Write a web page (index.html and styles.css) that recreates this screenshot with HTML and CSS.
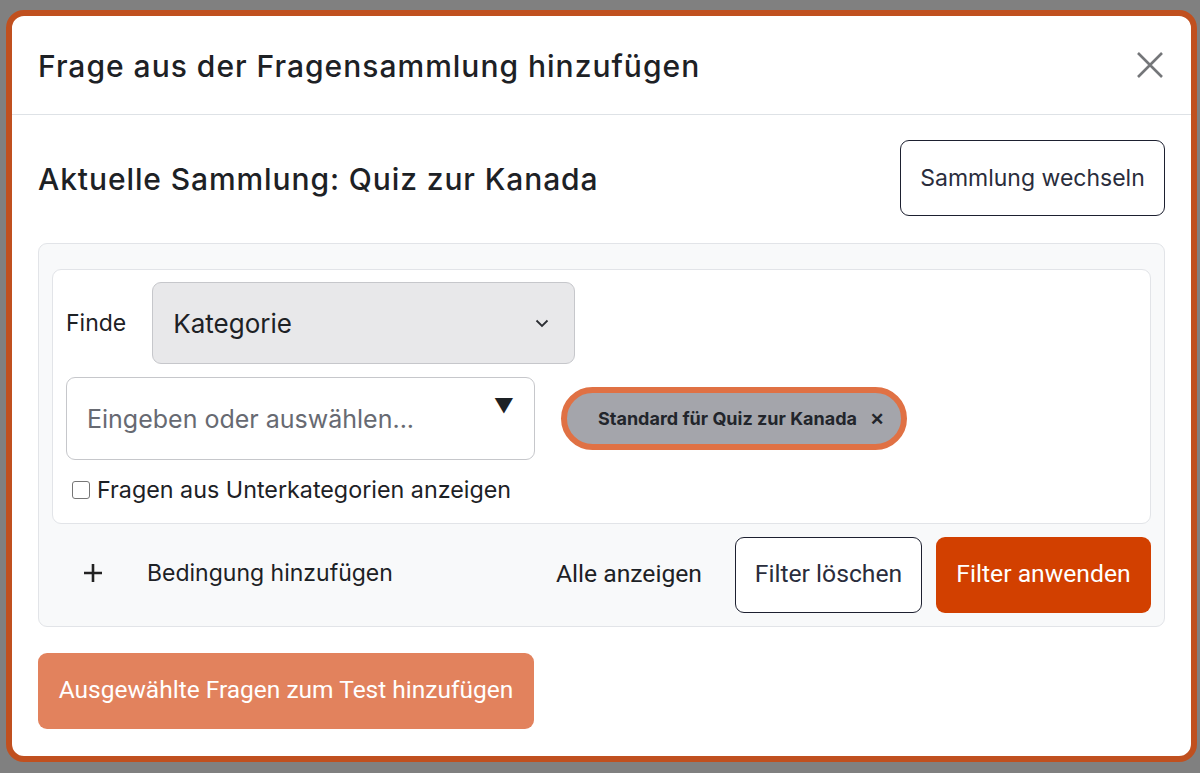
FILE: index.html
```html
<!DOCTYPE html>
<html lang="de">
<head>
<meta charset="utf-8">
<title>Frage aus der Fragensammlung hinzufügen</title>
<link rel="stylesheet" href="styles.css">
</head>
<body>
<div class="modal">
  <header class="modal-header">
    <h1 class="modal-title">Frage aus der Fragensammlung hinzufügen</h1>
    <button class="close" aria-label="Schließen">
      <svg width="26" height="26" viewBox="0 0 26 26"><path d="M1 1 L25 25 M25 1 L1 25" stroke="#747679" stroke-width="2.6" fill="none"/></svg>
    </button>
  </header>
  <main class="modal-body">
    <div class="bank-row">
      <h2 class="bank-title">Aktuelle Sammlung: Quiz zur Kanada</h2>
      <button class="btn btn-outline switch">Sammlung wechseln</button>
    </div>
    <section class="filters">
      <div class="filter-card">
        <div class="find-row">
          <label class="find-label">Finde</label>
          <div class="select">
            <span>Kategorie</span>
            <svg width="14" height="9" viewBox="0 0 14 9"><path d="M1.5 1.5 L7 7 L12.5 1.5" stroke="#2c2e33" stroke-width="1.8" fill="none"/></svg>
          </div>
        </div>
        <div class="value-row">
          <div class="combo">
            <span class="placeholder">Eingeben oder auswählen...</span>
            <span class="combo-arrow">▼</span>
          </div>
          <div class="chip">
            <span>Standard für Quiz zur Kanada</span>
            <span class="chip-x">✕</span>
          </div>
        </div>
        <label class="check-row"><span class="checkbox"></span>Fragen aus Unterkategorien anzeigen</label>
      </div>
      <div class="filter-actions">
        <div class="add-cond">
          <svg class="plus" width="20" height="20" viewBox="0 0 20 20"><path d="M10 1 V19 M1 10 H19" stroke="#222" stroke-width="2.6"/></svg>
          <span>Bedingung hinzufügen</span>
        </div>
        <div class="actions-right">
          <span class="show-all">Alle anzeigen</span>
          <button class="btn btn-outline rb">Filter löschen</button>
          <button class="btn btn-primary rb">Filter anwenden</button>
        </div>
      </div>
    </section>
    <button class="btn btn-add">Ausgewählte Fragen zum Test hinzufügen</button>
  </main>
</div>
</body>
</html>
```
FILE: styles.css
```css
* { box-sizing: border-box; }
html, body { margin: 0; }
body {
  background: #808080;
  padding: 10px 3px 11px 6px;
  font-family: Inter, "Noto Sans", sans-serif;
  color: #1d2125;
}
.modal {
  background: #fff;
  border: 6px solid #c0501f;
  border-radius: 18px;
  height: 752px;
  display: flex;
  flex-direction: column;
}
.modal-header {
  height: 99px;
  border-bottom: 1px solid #dee2e6;
  display: flex;
  align-items: center;
  justify-content: space-between;
  padding: 0 26px 0 26px;
}
.modal-title {
  margin: 0;
  font-family: Inter, sans-serif;
  font-weight: 500;
  font-size: 30px;
  letter-spacing: 1px;
  color: #1d2125;
  padding-top: 2px;
}
.close {
  background: none;
  border: 0;
  padding: 0;
  margin-right: 2px;
  display: flex;
}
.modal-body {
  padding: 25px 26px 26px 26px;
}
.bank-row {
  display: flex;
  justify-content: space-between;
  align-items: center;
}
.bank-title {
  margin: 0;
  font-weight: 500;
  font-size: 30px;
  letter-spacing: 0.9px;
  color: #1d2125;
  padding-top: 2px;
}
.btn {
  font-family: Inter, sans-serif;
  height: 76px;
  border-radius: 9px;
  font-size: 20px;
  padding: 0 10px;
  cursor: pointer;
  white-space: nowrap;
}
.btn-outline {
  background: #fff;
  border: 1px solid #1d2030;
  color: #2a2d3c;
}
.switch { width: 265px; font-size: 23px; }
.filters {
  margin-top: 27px;
  background: #f8f9fa;
  border: 1px solid #e2e4e8;
  border-radius: 9px;
  padding: 25px 13px 13px 13px;
}
.filter-card {
  background: #fff;
  border: 1px solid #e2e4e8;
  border-radius: 9px;
  padding: 12px 13px 20px 13px;
}
.find-row {
  display: flex;
  align-items: center;
  gap: 26px;
}
.find-label { font-size: 23px; color: #1d2125; }
.select {
  width: 423px;
  height: 82px;
  background: #e8e8ea;
  border: 1px solid #c6c7cb;
  border-radius: 9px;
  display: flex;
  align-items: center;
  justify-content: space-between;
  padding: 0 25px 0 20px;
  font-size: 26px;
  color: #1d2125;
}
.value-row {
  margin-top: 13px;
  display: flex;
  align-items: center;
  gap: 26px;
}
.combo {
  width: 469px;
  height: 83px;
  border: 1px solid #c6c7cb;
  border-radius: 9px;
  display: flex;
  justify-content: space-between;
  padding: 0 20px 0 20px;
  font-size: 25px;
}
.placeholder { color: #676a72; align-self: center; }
.combo-arrow { font-size: 20px; color: #1d2125; margin-top: 16px; }
.chip {
  height: 63px;
  border: 6px solid #e07144;
  border-radius: 32px;
  background: #a4a5ab;
  display: flex;
  align-items: center;
  gap: 13px;
  padding: 0 17px 0 31px;
  font-family: Inter, sans-serif;
  font-weight: 700;
  font-size: 18px;
  color: #22252b;
}
.chip-x { font-size: 17px; font-weight: 700; }
.check-row {
  display: flex;
  align-items: center;
  gap: 7px;
  margin-top: 17px;
  margin-left: 6px;
  font-size: 23.3px;
  line-height: 26px;
  color: #1d2125;
}
.checkbox {
  width: 18px;
  height: 18px;
  border: 1px solid #767676;
  border-radius: 3px;
  background: #fff;
}
.filter-actions {
  margin-top: 13px;
  display: flex;
  justify-content: space-between;
  align-items: center;
}
.add-cond {
  display: flex;
  align-items: center;
  gap: 44px;
  padding-left: 31px;
  padding-bottom: 4px;
  font-size: 23px;
  color: #1d2125;
}
.actions-right {
  display: flex;
  align-items: center;
  gap: 14px;
}
.show-all {
  font-family: Roboto, sans-serif;
  font-size: 24.7px;
  color: #1d2125;
  margin-right: 19px;
  padding-bottom: 4px;
}
.rb {
  font-family: Roboto, sans-serif;
  font-size: 24.7px;
  padding-bottom: 3px;
}
.rb.btn-outline { width: 187px; }
.btn-primary {
  width: 215px;
  background: #d24000;
  border: 0;
  color: #fff;
}
.btn-add {
  margin-top: 26px;
  width: 496px;
  background: #e2825d;
  border: 0;
  color: #fff;
  font-family: Roboto, sans-serif;
  font-size: 24.5px;
  padding-bottom: 3px;
}
```
